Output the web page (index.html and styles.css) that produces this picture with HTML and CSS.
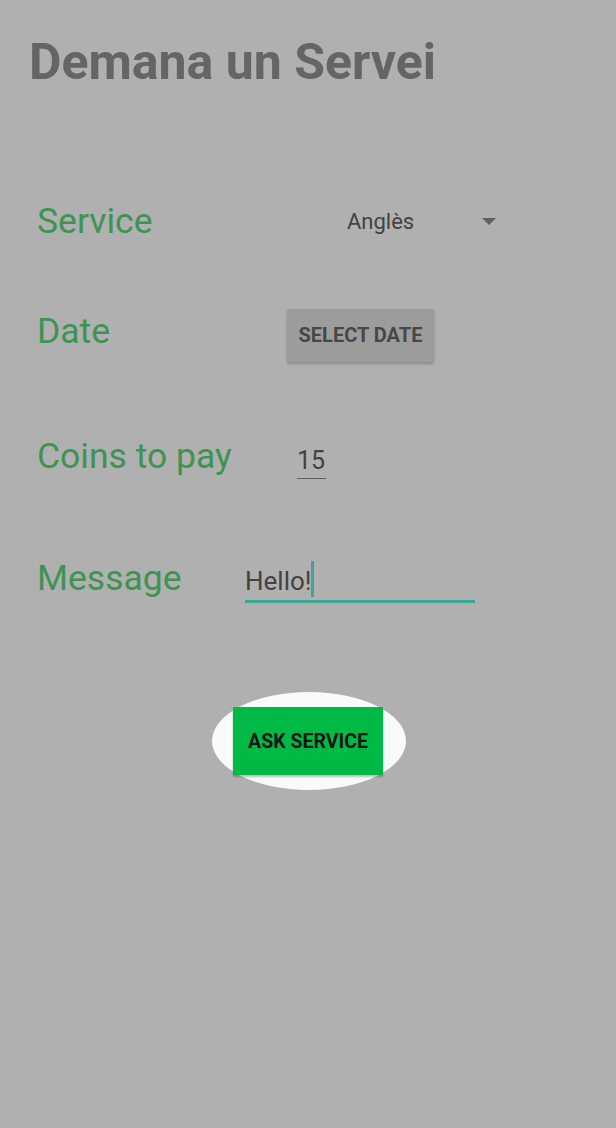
FILE: index.html
```html
<!DOCTYPE html>
<html>
<head>
<meta charset="utf-8">
<link rel="stylesheet" href="styles.css">
</head>
<body>
<div class="screen">
  <h1 class="title">Demana un Servei</h1>
  <div class="form">
    <div class="row row-service">
      <span class="label">Service</span>
      <div class="spinner">
        <span class="spinner-text">Anglès</span>
        <span class="caret"></span>
      </div>
    </div>
    <div class="row row-date">
      <span class="label">Date</span>
      <button class="date-btn">SELECT DATE</button>
    </div>
    <div class="row row-coins">
      <span class="label">Coins to pay</span>
      <span class="coins">15</span>
    </div>
    <div class="row row-message">
      <span class="label">Message</span>
      <div class="msg"><span class="msg-text">Hello!</span><span class="cursor"></span></div>
    </div>
  </div>
  <div class="action">
    <div class="spot">
      <button class="ask-btn">ASK SERVICE</button>
    </div>
  </div>
</div>
</body>
</html>
```

FILE: styles.css
```css
* { box-sizing: border-box; }
html, body { margin: 0; padding: 0; }
body {
  width: 616px;
  height: 1128px;
  background: #b0b0b0;
  font-family: Roboto, "Noto Sans", sans-serif;
  overflow: hidden;
}
.screen {
  padding: 34px 0 0 0;
}
.title {
  margin: 0 0 0 29px;
  font-size: 50px;
  line-height: 56px;
  font-weight: 700;
  color: #656565;
}
.form {
  display: flex;
  flex-direction: column;
  margin-top: 100px;
  padding-left: 37px;
}
.row {
  display: flex;
  align-items: center;
  height: 62px;
}
.label {
  color: #3d9452;
  font-size: 35.5px;
  line-height: 42px;
}
.row-service .label { width: 294px; }
.spinner {
  display: flex;
  align-items: center;
  width: 166px;
  padding-left: 16px;
}
.spinner-text {
  font-size: 22px;
  color: #424242;
  flex: 1;
}
.caret {
  width: 0; height: 0;
  border-left: 7px solid transparent;
  border-right: 7px solid transparent;
  border-top: 7px solid #5f5f5f;
  margin-right: 1px;
}
.row-date { margin-top: 52px; }
.row-date .label { width: 250px; margin-top: -8px; }
.date-btn {
  width: 147px;
  height: 53px;
  border: none;
  border-radius: 2px;
  background: #9c9c9c;
  box-shadow: 0 2px 3px rgba(0,0,0,0.22);
  color: #474747;
  font-family: Roboto, sans-serif;
  font-weight: 700;
  font-size: 20px;
  padding: 0;
}
.row-coins { margin-top: 61px; }
.row-coins .label { width: 260px; margin-top: -4px; }
.coins {
  font-size: 25px;
  color: #424242;
  width: 29px;
  padding-top: 4px;
  padding-bottom: 3px;
  border-bottom: 1px solid #5f5f5f;
  margin-top: 5px;
}
.row-message { margin-top: 58px; }
.row-message .label { width: 208px; }
.msg {
  width: 230px;
  display: flex;
  align-items: flex-end;
  border-bottom: 3px solid #3aa896;
  padding-bottom: 4px;
  margin-top: 7px;
}
.msg-text {
  font-size: 26px;
  color: #424242;
  line-height: 30px;
}
.cursor {
  width: 3px;
  height: 36px;
  background: #3aa896;
  margin-left: -1px;
  margin-bottom: -1px;
}
.action {
  display: flex;
  justify-content: center;
  margin-top: 83px;
  padding-left: 2px;
}
.spot {
  width: 194px;
  height: 98px;
  border-radius: 50%;
  background: #fafafa;
  display: flex;
  align-items: center;
  justify-content: center;
}
.ask-btn {
  width: 150px;
  height: 68px;
  border: none;
  margin-left: -2px;
  background: #00ba45;
  color: #141414;
  font-family: Roboto, sans-serif;
  font-weight: 700;
  font-size: 19.5px;
  padding: 0;
  box-shadow: 0 2px 2px rgba(0,0,0,0.25);
}
```
